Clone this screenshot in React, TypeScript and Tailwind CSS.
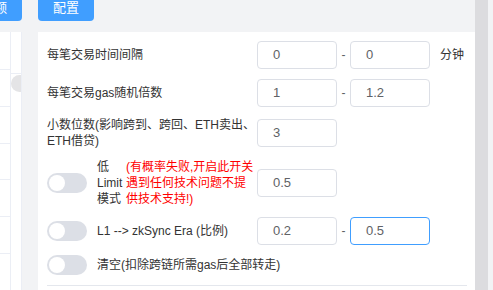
import React from "react";

const font = "font-['Liberation_Sans','Noto_Sans_CJK_SC',sans-serif]";

const Switch = () => (
  <div className="relative w-[40px] h-[20px] rounded-full bg-[#dcdfe6] shrink-0">
    <div className="absolute left-[2px] top-[2px] w-[16px] h-[16px] rounded-full bg-white" />
  </div>
);

const Input = ({ value, focused = false }: { value: string; focused?: boolean }) => (
  <div
    className={
      "w-[80px] h-[28px] rounded-[4px] border bg-white flex items-center pl-[15px] text-[13px] text-[#606266] " +
      (focused ? "border-[#409eff]" : "border-[#dcdfe6]")
    }
  >
    {value}
  </div>
);

const Dash = () => <span className="w-[13px] text-center text-[#606266] text-[12px]">-</span>;

const App = () => {
  return (
    <div className={`w-[493px] h-[290px] overflow-hidden bg-[#f2f3f5] flex text-[12px] text-[#333] ${font}`}>
      <div className="w-[475px] flex flex-col shrink-0">
        {/* top buttons */}
        <div className="h-[32px] flex shrink-0">
          <div className="w-[22px] h-[26px] mt-[-5px] overflow-hidden rounded-br-[4px] bg-[#409eff] flex justify-end items-center">
            <span className="whitespace-nowrap pr-[15px] text-white text-[13px]">查询余额</span>
          </div>
          <div className="ml-[16px] w-[56px] h-[26px] mt-[-5px] rounded-b-[4px] bg-[#409eff] flex items-center justify-center text-white text-[13px]">
            配置
          </div>
        </div>

        <div className="flex flex-1 min-h-0">
          {/* left table strip */}
          <div className="w-[22px] bg-white flex shrink-0 border-r border-[#ebeef5]">
            <div className="w-[11px] border-r border-[#ebeef5] flex flex-col">
              <div className="h-[41px]" />
              {[0, 1, 2, 3, 4, 5].map((i) => (
                <div key={i} className="h-[41px] border-t border-[#ebeef5]" />
              ))}
            </div>
            <div className="flex-1 flex flex-col overflow-hidden">
              <div className="h-[41px]" />
              <div className="border-t border-[#ebeef5] pt-[1px]">
                <div className="w-[22px] h-[17px] rounded-full bg-[#e4e4e6]" />
              </div>
            </div>
          </div>

          {/* main panel */}
          <div className="ml-[16px] flex-1 bg-white flex flex-col gap-[10px] pt-[9px] pl-[9px] pr-[8px]">
            <div className="flex items-center h-[28px]">
              <div className="w-[210px] shrink-0">每笔交易时间间隔</div>
              <Input value="0" />
              <Dash />
              <Input value="0" />
              <span className="ml-[10px]">分钟</span>
            </div>

            <div className="flex items-center h-[28px]">
              <div className="w-[210px] shrink-0">每笔交易gas随机倍数</div>
              <Input value="1" />
              <Dash />
              <Input value="1.2" />
            </div>

            <div className="flex items-center h-[32px]">
              <div className="w-[210px] shrink-0 leading-[16px]">
                <div className="whitespace-nowrap">小数位数(影响跨到、跨回、ETH卖出、</div>
                <div>ETH借贷)</div>
              </div>
              <Input value="3" />
            </div>

            <div className="flex items-center h-[48px]">
              <div className="w-[210px] shrink-0 flex items-center gap-[10px]">
                <Switch />
                <div className="flex leading-[16px]">
                  <div className="w-[29px] shrink-0">
                    <div>低</div>
                    <div>Limit</div>
                    <div>模式</div>
                  </div>
                  <div className="text-[#ff0000] whitespace-nowrap">
                    <div>(有概率失败,开启此开关</div>
                    <div>遇到任何技术问题不提</div>
                    <div>供技术支持!)</div>
                  </div>
                </div>
              </div>
              <Input value="0.5" />
            </div>

            <div className="flex items-center h-[28px]">
              <div className="w-[210px] shrink-0 flex items-center gap-[10px]">
                <Switch />
                <span>L1 --&gt; zkSync Era (比例)</span>
              </div>
              <Input value="0.2" />
              <Dash />
              <Input value="0.5" focused />
            </div>

            <div className="flex items-center h-[20px]">
              <div className="flex items-center gap-[10px]">
                <Switch />
                <span>清空(扣除跨链所需gas后全部转走)</span>
              </div>
            </div>

            <div className="border-t border-[#e4e7ed]" />
          </div>
        </div>
      </div>
      <div className="w-[13px] bg-[#dcdcdf] shrink-0" />
      <div className="flex-1 bg-[#f2f3f5]" />
    </div>
  );
};

export default App;
